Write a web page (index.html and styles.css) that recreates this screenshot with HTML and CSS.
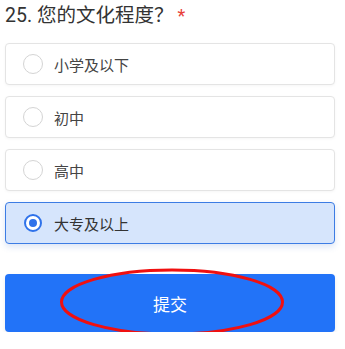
FILE: index.html
```html
<!DOCTYPE html>
<html lang="zh">
<head>
<meta charset="utf-8">
<link rel="stylesheet" href="styles.css">
</head>
<body>
<div class="page">
  <div class="title">25. 您的文化程度？<span class="req">*</span></div>
  <div class="options">
    <div class="option"><span class="radio"></span><span class="label">小学及以下</span></div>
    <div class="option"><span class="radio"></span><span class="label">初中</span></div>
    <div class="option"><span class="radio"></span><span class="label">高中</span></div>
    <div class="option selected"><span class="radio"></span><span class="label">大专及以上</span></div>
  </div>
  <div class="submit-wrap">
    <button class="submit">提交</button>
    <svg class="mark" width="226" height="68" viewBox="0 0 226 68"><ellipse cx="113" cy="34" rx="110.5" ry="32" fill="none" stroke="#f01010" stroke-width="3"/></svg>
  </div>
</div>
</body>
</html>
```
FILE: styles.css
```css
html, body {
  margin: 0;
  padding: 0;
  background: #ffffff;
}
.page {
  padding: 0 10px 0 5px;
  font-family: "Noto Sans CJK SC", "Noto Sans", sans-serif;
}
.title {
  font-family: "Roboto", "Noto Sans CJK SC", sans-serif;
  font-size: 19.5px;
  line-height: 30px;
  height: 30px;
  padding-top: 1px;
  box-sizing: border-box;
  color: #333333;
  margin-bottom: 13px;
  white-space: nowrap;
}
.req {
  color: #e8403a;
  margin-left: 4px;
  font-size: 18px;
}
.options {
  display: flex;
  flex-direction: column;
  gap: 11px;
}
.option {
  box-sizing: border-box;
  height: 42px;
  border: 1px solid #e4e4e4;
  border-radius: 4px;
  display: flex;
  align-items: center;
  padding-left: 17px;
  background: #ffffff;
  box-shadow: 0 1px 3px rgba(0,0,0,0.04);
}
.radio {
  box-sizing: border-box;
  width: 20px;
  height: 20px;
  border: 1px solid #d4d4d4;
  border-radius: 50%;
  margin-right: 11px;
  flex: none;
  position: relative;
}
.label {
  font-size: 15px;
  color: #444444;
}
.option.selected {
  background: #d6e5fc;
  border-color: #3c7ce4;
  box-shadow: 0 3px 6px rgba(60,110,200,0.18);
}
.option.selected .radio {
  width: 18px;
  height: 18px;
  margin-left: 1px;
  margin-right: 12px;
  border: 2.5px solid #2f72ea;
  background: #ffffff;
}
.option.selected .radio::after {
  content: "";
  position: absolute;
  left: 50%;
  top: 50%;
  width: 8px;
  height: 8px;
  margin: -4px 0 0 -4px;
  border-radius: 50%;
  background: #2f72ea;
}
.option.selected .label {
  color: #333333;
}
.submit-wrap {
  position: relative;
  margin-top: 30px;
}
.submit {
  display: block;
  width: 100%;
  height: 58px;
  border: none;
  border-radius: 4px;
  background: #2273f8;
  color: #ffffff;
  font-family: "Noto Sans CJK SC", sans-serif;
  font-size: 17px;
  box-shadow: 0 2px 4px rgba(0,0,0,0.08);
  padding: 0;
}
.mark {
  position: absolute;
  left: 54px;
  top: -6px;
  pointer-events: none;
}
```
